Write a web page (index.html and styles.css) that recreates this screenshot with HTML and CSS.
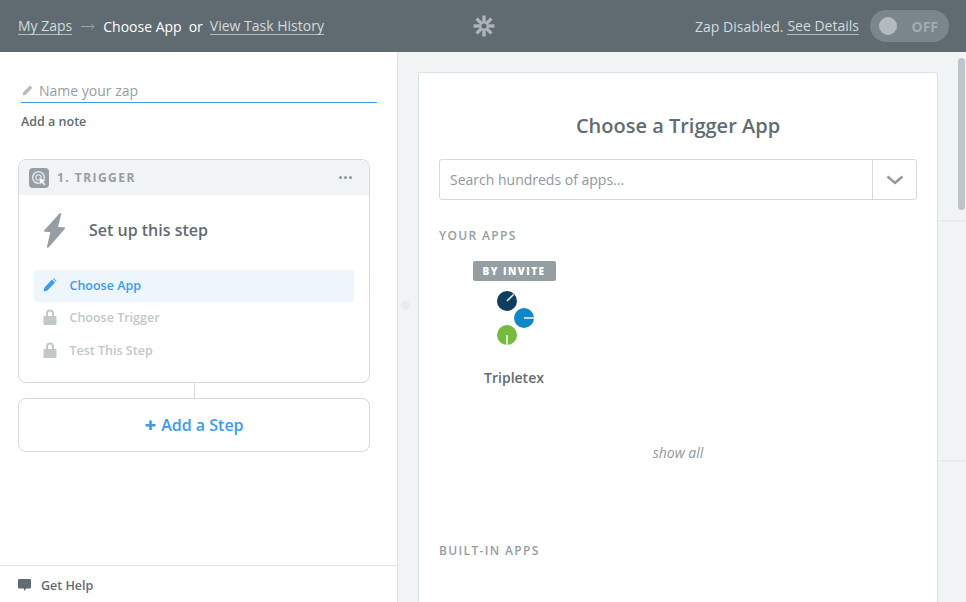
FILE: index.html
```html
<!DOCTYPE html>
<html lang="en">
<head>
    <meta charset="UTF-8">
    <meta name="viewport" content="width=device-width, initial-scale=1.0">
    <title>Choose App</title>
    <link rel="stylesheet" href="styles.css">
</head>
<body>
    <div class="header">
        <div class="crumbs">
            <a href="#" class="crumb-link">My Zaps</a>
            <svg class="crumb-arrow" width="14" height="7" viewBox="0 0 14 7"><path d="M0 3.500h13M10.500 1l2.500 2.500-2.500 2.500" fill="none" stroke="#97a1a6"/></svg>
            <span class="crumb-current">Choose App</span>
            <span class="crumb-or">or</span>
            <a href="#" class="crumb-link">View Task History</a>
        </div>
        <svg class="spinner" width="22" height="22" viewBox="0 0 22 22">
            <g stroke="#adb5b9" stroke-width="3.400">
                <path d="M11 0.500V21.500"/>
                <path d="M0.500 11H21.500"/>
                <path d="M3.600 3.600L18.400 18.400"/>
                <path d="M18.400 3.600L3.600 18.400"/>
            </g>
            <circle cx="11" cy="11" r="4.600" fill="#adb5b9"/>
            <circle cx="11" cy="11" r="2.600" fill="#5f6b71"/>
        </svg>
        <div class="status">
            <span class="status-text">Zap Disabled.</span>
            <a href="#" class="crumb-link status-link">See Details</a>
            <div class="toggle">
                <span class="toggle-knob"></span>
                <span class="toggle-label">OFF</span>
            </div>
        </div>
    </div>

    <div class="main">
        <div class="sidebar">
            <div class="sidebar-body">
                <div class="name-field">
                    <svg width="12" height="12" viewBox="0 0 12 12"><path d="M0.500 11.500l0.800-3.200 6.600-6.900 2.500 2.400-6.700 7-3.200 0.700z" fill="#b4bcc0"/></svg>
                    <span>Name your zap</span>
                </div>
                <div class="add-note">Add a note</div>

                <div class="step">
                    <div class="step-head">
                        <span class="step-icon">
                            <svg width="20" height="20" viewBox="0 0 20 20">
                                <circle cx="9.500" cy="9.500" r="5.800" fill="none" stroke="#dfe3e5" stroke-width="1.500"/>
                                <circle cx="9.500" cy="9.500" r="2.600" fill="none" stroke="#dfe3e5" stroke-width="1.300"/>
                                <path d="M10 9.500l7 3-2.600 1 2.200 3-1.500 1.200-2.200-3-1.900 2z" fill="#fff" stroke="#959ea2" stroke-width="0.500"/>
                            </svg>
                        </span>
                        <span class="step-title">1. TRIGGER</span>
                        <span class="step-dots"><i></i><i></i><i></i></span>
                    </div>
                    <div class="step-setup">
                        <svg width="21" height="35" viewBox="0 0 21 35"><path d="M15.500 0.500c1-0.700 2 0 1.700 1.100l-3.200 12.400 5.800 0.200c1 0 1.500 0.900 0.900 1.700l-15.900 18.400c-0.900 0.900-2.100 0.300-1.800-0.800l3.400-14.500-5.400-0.200c-0.900 0-1.200-0.800-0.700-1.500z" fill="#959ea2"/></svg>
                        <span>Set up this step</span>
                    </div>
                    <ul class="step-list">
                        <li class="active">
                            <svg width="14" height="14" viewBox="0 0 14 14"><path d="M0.500 13.500l1-4 7.500-8 3 3-7.600 8z M10 0.800l0.800-0.500 2.700 2.700-0.600 0.800z" fill="#3d9bec"/></svg>
                            <span>Choose App</span>
                        </li>
                        <li>
                            <svg width="14" height="16" viewBox="0 0 14 16"><path d="M3 7V4.500a4 4 0 0 1 8 0V7h1.500a1 1 0 0 1 1 1v7a1 1 0 0 1-1 1h-11a1 1 0 0 1-1-1V8a1 1 0 0 1 1-1z M5 7h4V4.500a2 2 0 0 0-4 0z" fill="#c0c8cc" fill-rule="evenodd"/></svg>
                            <span>Choose Trigger</span>
                        </li>
                        <li>
                            <svg width="14" height="16" viewBox="0 0 14 16"><path d="M3 7V4.500a4 4 0 0 1 8 0V7h1.500a1 1 0 0 1 1 1v7a1 1 0 0 1-1 1h-11a1 1 0 0 1-1-1V8a1 1 0 0 1 1-1z M5 7h4V4.500a2 2 0 0 0-4 0z" fill="#c0c8cc" fill-rule="evenodd"/></svg>
                            <span>Test This Step</span>
                        </li>
                    </ul>
                </div>
                <div class="step-line"></div>
                <div class="add-step"><b>+</b> Add a Step</div>
            </div>
            <div class="help">
                <svg width="13" height="12" viewBox="0 0 13 12"><path d="M1.200 0h10.600a1.200 1.200 0 0 1 1.200 1.200v7.100a1.200 1.200 0 0 1-1.200 1.200H8l-1.500 2.500-0.800-2.500H1.200A1.200 1.200 0 0 1 0 8.300V1.200A1.200 1.200 0 0 1 1.200 0z" fill="#5f6c72"/></svg>
                <span>Get Help</span>
            </div>
        </div>

        <div class="content">
            <span class="handle"></span>
            <div class="panel">
                <h2>Choose a Trigger App</h2>
                <div class="search">
                    <div class="search-input">Search hundreds of apps...</div>
                    <div class="search-btn">
                        <svg width="18" height="10" viewBox="0 0 18 10"><path d="M1.500 1.500L9 8l7.500-6.500" fill="none" stroke="#8f999e" stroke-width="2.400"/></svg>
                    </div>
                </div>
                <h3 class="group-title">YOUR APPS</h3>
                <div class="app">
                    <div class="badge">BY INVITE</div>
                    <svg class="app-logo" width="40" height="56" viewBox="0 0 40 56">
                        <circle cx="10" cy="10" r="10" fill="#0e3d62"/>
                        <path d="M10 10l6.500-6.500" stroke="#fff" stroke-width="1.400"/>
                        <circle cx="27" cy="27" r="10" fill="#0f88c8"/>
                        <path d="M27 27h10" stroke="#fff" stroke-width="1.400"/>
                        <circle cx="10" cy="44" r="10" fill="#76bb3f"/>
                        <path d="M10 44v10" stroke="#fff" stroke-width="1.400"/>
                    </svg>
                    <div class="app-name">Tripletex</div>
                </div>
                <div class="show-all">show all</div>
                <h3 class="group-title built-in">BUILT-IN APPS</h3>
            </div>
            <div class="side-strip">
                <div class="scrollbar"></div>
                <div class="side-rule rule-one"></div>
                <div class="side-rule rule-two"></div>
            </div>
        </div>
    </div>
</body>
</html>
```

FILE: styles.css
```css
* {
  box-sizing: border-box;
}

html,
body {
  height: 100%;
}

body {
  margin: 0;
  font-family: "Open Sans", "Liberation Sans", sans-serif;
  color: #5f6c72;
  overflow: hidden;
  display: flex;
  flex-direction: column;
}

/* Header styles */
.header {
  height: 52px;
  flex: none;
  background-color: #5f6b71;
  color: #fff;
  padding: 0 17px 0 18px;
  display: grid;
  grid-template-columns: 1fr auto 1fr;
  align-items: center;
  font-size: 14px;
}

.crumbs {
  display: flex;
  align-items: center;
}

.crumb-link {
  color: #d5dadc;
  text-decoration: none;
  border-bottom: 1px solid #b4bcc0;
  line-height: 17px;
}

.crumb-arrow {
  margin: 0 8px 0 9px;
}

.crumb-current {
  color: #fff;
}

.crumb-or {
  color: #fff;
  margin: 0 7px;
}

.spinner {
  display: block;
  margin-bottom: 1px;
}

.status {
  display: flex;
  align-items: center;
  justify-content: flex-end;
  color: #d5dadc;
}

.status-link {
  margin-left: 4px;
}

.toggle {
  width: 79px;
  height: 32px;
  margin-left: 11px;
  border-radius: 16px;
  background-color: #7b868b;
  display: flex;
  align-items: center;
  padding: 0 11px 0 9px;
  justify-content: space-between;
}

.toggle-knob {
  width: 18px;
  height: 18px;
  border-radius: 50%;
  background-color: #b4bbbf;
}

.toggle-label {
  font-size: 14px;
  font-weight: 700;
  color: #a3acb0;
}

/* Left column */
.main {
  flex: 1;
  display: flex;
  min-height: 0;
}

.sidebar {
  width: 398px;
  flex: none;
  background-color: #fff;
  border-right: 1px solid #dde2e5;
  display: flex;
  flex-direction: column;
}

.sidebar-body {
  flex: 1;
  padding: 27px 27px 0 18px;
}

.name-field {
  margin: 0 -7px 0 3px;
  height: 24px;
  padding-bottom: 1px;
  border-bottom: 1px solid #3d9bec;
  display: flex;
  align-items: center;
  gap: 5px;
  font-size: 14px;
  color: #959ea2;
}

.name-field svg {
  margin-left: 1px;
}

.add-note {
  margin: 10px 0 0 3px;
  font-size: 12.500px;
  font-weight: 600;
  line-height: 18px;
}

.step {
  margin-top: 28px;
  height: 224px;
  border: 1px solid #d5dade;
  border-radius: 8px;
  overflow: hidden;
}

.step-head {
  height: 35px;
  background-color: #f1f4f5;
  display: flex;
  align-items: center;
  padding: 0 17px 0 10px;
}

.step-icon {
  width: 20px;
  height: 20px;
  border-radius: 4px;
  background-color: #959ea2;
  display: block;
}

.step-icon svg {
  display: block;
}

.step-title {
  margin-left: 8px;
  font-size: 12px;
  font-weight: 700;
  letter-spacing: 1.450px;
  color: #959ea2;
}

.step-dots {
  margin-left: auto;
  display: flex;
  gap: 2px;
}

.step-dots i {
  width: 3px;
  height: 3px;
  border-radius: 50%;
  background-color: #8f999e;
}

.step-setup {
  height: 75px;
  padding: 0 0 5px 25px;
  display: flex;
  align-items: center;
  gap: 24px;
  font-size: 16px;
  font-weight: 600;
}

.step-list {
  list-style: none;
  margin: 0 15px;
  padding: 0;
}

.step-list li {
  height: 32px;
  margin-bottom: 1px;
  padding: 0 0 4px 9px;
  display: flex;
  align-items: center;
  gap: 12.500px;
  font-size: 12.500px;
  font-weight: 600;
  color: #c0c8cc;
  border-radius: 3px;
}

.step-list li.active {
  padding-bottom: 2px;
  background-color: #edf5fd;
  color: #3d9bec;
}

.step-line {
  width: 1px;
  height: 15px;
  margin-left: 176px;
  background-color: #d5dade;
}

.add-step {
  height: 54px;
  border: 1px solid #d5dade;
  border-radius: 8px;
  display: flex;
  align-items: center;
  justify-content: center;
  gap: 5px;
  font-size: 16px;
  font-weight: 600;
  color: #3d9bec;
}

.add-step b {
  font-size: 20px;
  line-height: 20px;
  font-weight: 800;
}

.help {
  height: 37px;
  border-top: 1px solid #dde2e5;
  padding: 2px 0 0 18px;
  display: flex;
  align-items: center;
  gap: 10px;
  font-size: 12.500px;
  font-weight: 600;
}

/* Right column */
.content {
  flex: 1;
  background-color: #f1f4f5;
  padding: 20px 0 0 20px;
  display: flex;
  position: relative;
  min-width: 0;
}

.handle {
  position: absolute;
  left: 3px;
  top: 249px;
  width: 9px;
  height: 9px;
  border-radius: 50%;
  background-color: #e7ebed;
}

.panel {
  width: 520px;
  flex: none;
  background-color: #fff;
  border: 1px solid #dde2e5;
  border-bottom: 0;
  border-radius: 3px 3px 0 0;
  padding: 39px 20px 0;
}

.panel h2 {
  margin: 0;
  text-align: center;
  font-size: 20px;
  line-height: 28px;
  font-weight: 600;
}

.search {
  margin-top: 19px;
  height: 41px;
  display: flex;
  border: 1px solid #d5dade;
  border-radius: 3px;
}

.search-input {
  flex: 1;
  padding-left: 10px;
  font-size: 14px;
  line-height: 39px;
  color: #8f999e;
}

.search-btn {
  width: 44px;
  border-left: 1px solid #d5dade;
  display: flex;
  align-items: center;
  justify-content: center;
}

.group-title {
  margin: 27px 0 0;
  font-size: 12px;
  line-height: 18px;
  font-weight: 600;
  letter-spacing: 1.350px;
  color: #959ea2;
}

.app {
  width: 150px;
  display: flex;
  flex-direction: column;
  align-items: center;
}

.badge {
  margin-top: 16px;
  width: 83px;
  height: 20px;
  border-radius: 2px;
  background-color: #959ea2;
  color: #fff;
  font-size: 10px;
  font-weight: 800;
  letter-spacing: 1.500px;
  line-height: 20px;
  text-align: center;
}

.app-logo {
  margin-top: 10px;
  margin-left: 6px;
}

.app-name {
  margin-top: 22px;
  font-size: 14px;
  line-height: 18px;
  font-weight: 600;
}

.show-all {
  margin-top: 56px;
  text-align: center;
  font-size: 14px;
  line-height: 20px;
  font-style: italic;
  color: #8f999e;
}

.built-in {
  margin-top: 79px;
}

.side-strip {
  flex: 1;
  position: relative;
}

.scrollbar {
  position: absolute;
  right: 1px;
  top: -14px;
  width: 7px;
  height: 152px;
  border-radius: 4px;
  background-color: #bcc5ca;
}

.side-rule {
  height: 2px;
  background-color: #e8ecee;
  position: absolute;
  left: 0;
  right: 0;
}

.rule-one {
  top: 148px;
}

.rule-two {
  top: 388px;
}
```
